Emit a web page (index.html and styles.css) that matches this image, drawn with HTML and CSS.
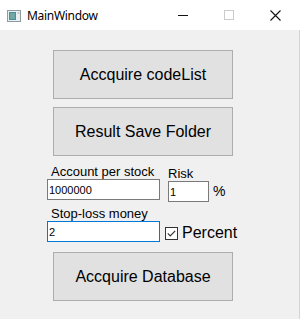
FILE: index.html
```
<!DOCTYPE html>
<html lang="en">
<head>
    <meta charset="UTF-8">
    <meta name="viewport" content="width=device-width, initial-scale=1.0">
    <title>MainWindow</title>
    <link rel="stylesheet" href="styles.css">
</head>
<body>
    <div class="window">
        <div class="titlebar">
            <svg class="app-icon" width="14" height="12" viewBox="0 0 14 12">
                <rect x="0.5" y="0.5" width="13" height="11" fill="#e9eef0" stroke="#8d9ca3"/>
                <rect x="2" y="2" width="7" height="8" fill="#4d8c8f"/>
                <rect x="3" y="3" width="5" height="6" fill="#6fa7a6"/>
                <rect x="10.5" y="2.5" width="2" height="1" fill="#9aa8ad"/>
            </svg>
            <span class="title">MainWindow</span>
            <div class="controls">
                <div class="ctl">
                    <svg width="10" height="10" viewBox="0 0 10 10"><rect x="0" y="5" width="10" height="1" fill="#111"/></svg>
                </div>
                <div class="ctl">
                    <svg width="10" height="10" viewBox="0 0 10 10"><rect x="0.5" y="0.5" width="9" height="9" fill="none" stroke="#cccccc"/></svg>
                </div>
                <div class="ctl">
                    <svg width="11" height="11" viewBox="0 0 11 11"><path d="M0.5 0.5 L10.5 10.5 M10.5 0.5 L0.5 10.5" stroke="#111" stroke-width="1.1"/></svg>
                </div>
            </div>
        </div>

        <div class="content">
            <button class="btn">Accquire codeList</button>
            <button class="btn second">Result Save Folder</button>

            <div class="row first-row">
                <div class="field">
                    <label class="lbl">Account per stock</label>
                    <input type="text" class="txt wide" value="1000000">
                </div>
                <div class="field risk">
                    <label class="lbl plain">Risk</label>
                    <div class="inline">
                        <input type="text" class="txt narrow" value="1">
                        <span class="pct">%</span>
                    </div>
                </div>
            </div>

            <div class="row second-row">
                <div class="field">
                    <label class="lbl">Stop-loss money</label>
                    <input type="text" class="txt wide focus" value="2">
                </div>
                <div class="check-wrap">
                    <span class="check">
                        <svg width="13" height="13" viewBox="0 0 13 13">
                            <rect x="0.5" y="0.5" width="12" height="12" fill="#fff" stroke="#333"/>
                            <path d="M2.8 6.4 L5.2 8.9 L10.2 3.8" fill="none" stroke="#333" stroke-width="1.2"/>
                        </svg>
                    </span>
                    <span class="check-text">Percent</span>
                </div>
            </div>

            <button class="btn third">Accquire Database</button>
        </div>
    </div>
</body>
</html>
```

FILE: styles.css
```
* { box-sizing: border-box; }
body { margin: 0; background: #fff; font-family: "Liberation Sans", Arial, sans-serif; }
.window { width: 300px; height: 319px; display: flex; flex-direction: column; }

.titlebar { height: 30px; background: #fff; display: flex; align-items: center; }
.app-icon { margin-left: 7px; margin-top: 2px; }
.title { margin-left: 6px; font-family: "Noto Sans", sans-serif; font-size: 12px; letter-spacing: -0.3px; color: #000; margin-top: 1px; }
.controls { margin-left: auto; display: flex; margin-right: 2px; }
.ctl { width: 46px; height: 30px; display: flex; align-items: center; justify-content: center; }

.content { flex: 1; background: #f0f0f0; border-right: 1px solid #d4d4d4; padding: 20px 0 0 47px; display: flex; flex-direction: column; align-items: flex-start; }

.btn { width: 180px; height: 49px; margin-left: 6px; background: #e1e1e1; border: 1px solid #adadad; font-family: "Liberation Sans", Arial, sans-serif; font-size: 16px; color: #000; padding: 0; }
.second { margin-top: 8px; }
.third { margin-top: 10px; }

.row { display: flex; align-items: flex-start; }
.first-row { margin-top: 9px; }
.second-row { margin-top: 5px; }
.field { display: flex; flex-direction: column; }
.lbl { font-size: 13px; line-height: 14px; padding-left: 4px; color: #000; }
.lbl.plain { padding-left: 0; }
.risk { margin-left: 8px; margin-top: 2px; }
.inline { display: flex; align-items: flex-start; }

.txt { height: 21px; border: 1px solid #7a7a7a; background: #fff; font-family: "Liberation Sans", Arial, sans-serif; font-size: 11px; padding: 0 1px; color: #000; outline: none; }
.wide { width: 113px; }
.narrow { width: 41px; }
.focus { border-color: #0078d7; }
.pct { font-size: 14px; line-height: 16px; margin-left: 4px; margin-top: 2px; }

.check-wrap { display: flex; align-items: flex-start; margin-left: 5px; margin-top: 18px; }
.check { display: block; width: 13px; height: 13px; margin-top: 2px; }
.check svg { display: block; }
.check-text { font-size: 16px; line-height: 16px; margin-left: 4px; }
```
